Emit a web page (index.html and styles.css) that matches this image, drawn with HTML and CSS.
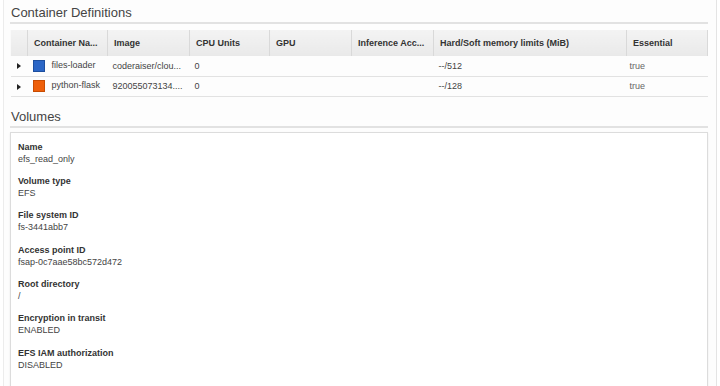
FILE: index.html
```html
<!doctype html>
<html lang="en">
  <head>
    <meta charset="UTF-8" />
    <meta name="viewport" content="width=device-width, initial-scale=1.0" />
    <title>Task Definition</title>
    <link rel="stylesheet" href="styles.css">
  </head>
  <body>
    <div class="page">
      <h2 class="section-title">Container Definitions</h2>

      <table class="containers">
        <colgroup>
          <col style="width: 17px">
          <col style="width: 80px">
          <col style="width: 82px">
          <col style="width: 80px">
          <col style="width: 82px">
          <col style="width: 82px">
          <col style="width: 193px">
          <col style="width: 81px">
        </colgroup>
        <thead>
          <tr>
            <th></th>
            <th>Container Na...</th>
            <th>Image</th>
            <th>CPU Units</th>
            <th>GPU</th>
            <th>Inference Acc...</th>
            <th>Hard/Soft memory limits (MiB)</th>
            <th>Essential</th>
          </tr>
        </thead>
        <tbody>
          <tr>
            <td><span class="caret"></span></td>
            <td><span class="swatch swatch-blue"></span>files-loader</td>
            <td>coderaiser/clou...</td>
            <td>0</td>
            <td></td>
            <td></td>
            <td>--/512</td>
            <td class="muted">true</td>
          </tr>
          <tr>
            <td><span class="caret"></span></td>
            <td><span class="swatch swatch-orange"></span>python-flask</td>
            <td>920055073134....</td>
            <td>0</td>
            <td></td>
            <td></td>
            <td>--/128</td>
            <td class="muted">true</td>
          </tr>
        </tbody>
      </table>

      <h2 class="section-title volumes-title">Volumes</h2>

      <div class="volume-panel">
        <div class="field">
          <div class="field-label">Name</div>
          <div class="field-value">efs_read_only</div>
        </div>
        <div class="field">
          <div class="field-label">Volume type</div>
          <div class="field-value">EFS</div>
        </div>
        <div class="field">
          <div class="field-label">File system ID</div>
          <div class="field-value">fs-3441abb7</div>
        </div>
        <div class="field">
          <div class="field-label">Access point ID</div>
          <div class="field-value">fsap-0c7aae58bc572d472</div>
        </div>
        <div class="field">
          <div class="field-label">Root directory</div>
          <div class="field-value">/</div>
        </div>
        <div class="field">
          <div class="field-label">Encryption in transit</div>
          <div class="field-value">ENABLED</div>
        </div>
        <div class="field">
          <div class="field-label">EFS IAM authorization</div>
          <div class="field-value">DISABLED</div>
        </div>
      </div>
    </div>
  </body>
</html>
```

FILE: styles.css
```css
* {
  margin: 0;
  padding: 0;
  box-sizing: border-box;
}

html,
body {
  height: 100%;
  overflow: hidden;
}

body {
  font-family: "Liberation Sans", Arial, sans-serif;
  background: #fff;
  color: #444;
}

.page {
  margin: 0 3px;
  height: 100%;
  padding: 0 8px 0 6px;
  border-left: 1px solid #ececec;
  border-right: 1px solid #e4e4e4;
  background: #fdfdfd;
}

.section-title {
  font-size: 13px;
  font-weight: normal;
  line-height: 16px;
  color: #444;
  padding: 5px 0 1px 1px;
  border-bottom: 2px solid #e2e2e2;
}

.containers {
  width: 697px;
  margin-top: 6px;
  border-collapse: collapse;
  table-layout: fixed;
  font-size: 9px;
}

.containers th {
  height: 26px;
  padding: 0 6px;
  text-align: left;
  font-weight: bold;
  color: #333;
  background: linear-gradient(#f3f3f3, #e9e9e9);
  border-left: 1px solid #fafafa;
  border-right: 1px solid #d9d9d9;
  white-space: nowrap;
  overflow: hidden;
}

.containers td {
  height: 20px;
  padding: 0 5px;
  border-bottom: 1px solid #e2e2e2;
  white-space: nowrap;
  overflow: hidden;
  vertical-align: middle;
}

.containers td:first-child {
  padding: 0 0 0 6px;
}

.containers td.muted {
  color: #666;
  padding-left: 3px;
}

.caret {
  display: inline-block;
  width: 0;
  height: 0;
  border-top: 3px solid transparent;
  border-bottom: 3px solid transparent;
  border-left: 4px solid #222;
  vertical-align: middle;
}

.swatch {
  display: inline-block;
  width: 12px;
  height: 12px;
  margin-right: 7px;
  vertical-align: middle;
}

.swatch-blue {
  background: #2b66c6;
  border: 1px solid #1d4f9f;
}

.swatch-orange {
  background: #ee5f0a;
  border: 1px solid #c84c02;
}

.volumes-title {
  margin-top: 7px;
}

.volume-panel {
  margin-top: 4px;
  height: 260px;
  padding: 8px 7px;
  background: #fff;
  border: 1px solid #dcdcdc;
  box-shadow: 0 1px 2px rgba(0, 0, 0, 0.08);
  font-size: 9px;
  line-height: 12px;
}

.field {
  margin-bottom: 10.4px;
}

.field-label {
  font-weight: bold;
  color: #333;
}

.field-value {
  color: #444;
}
```
